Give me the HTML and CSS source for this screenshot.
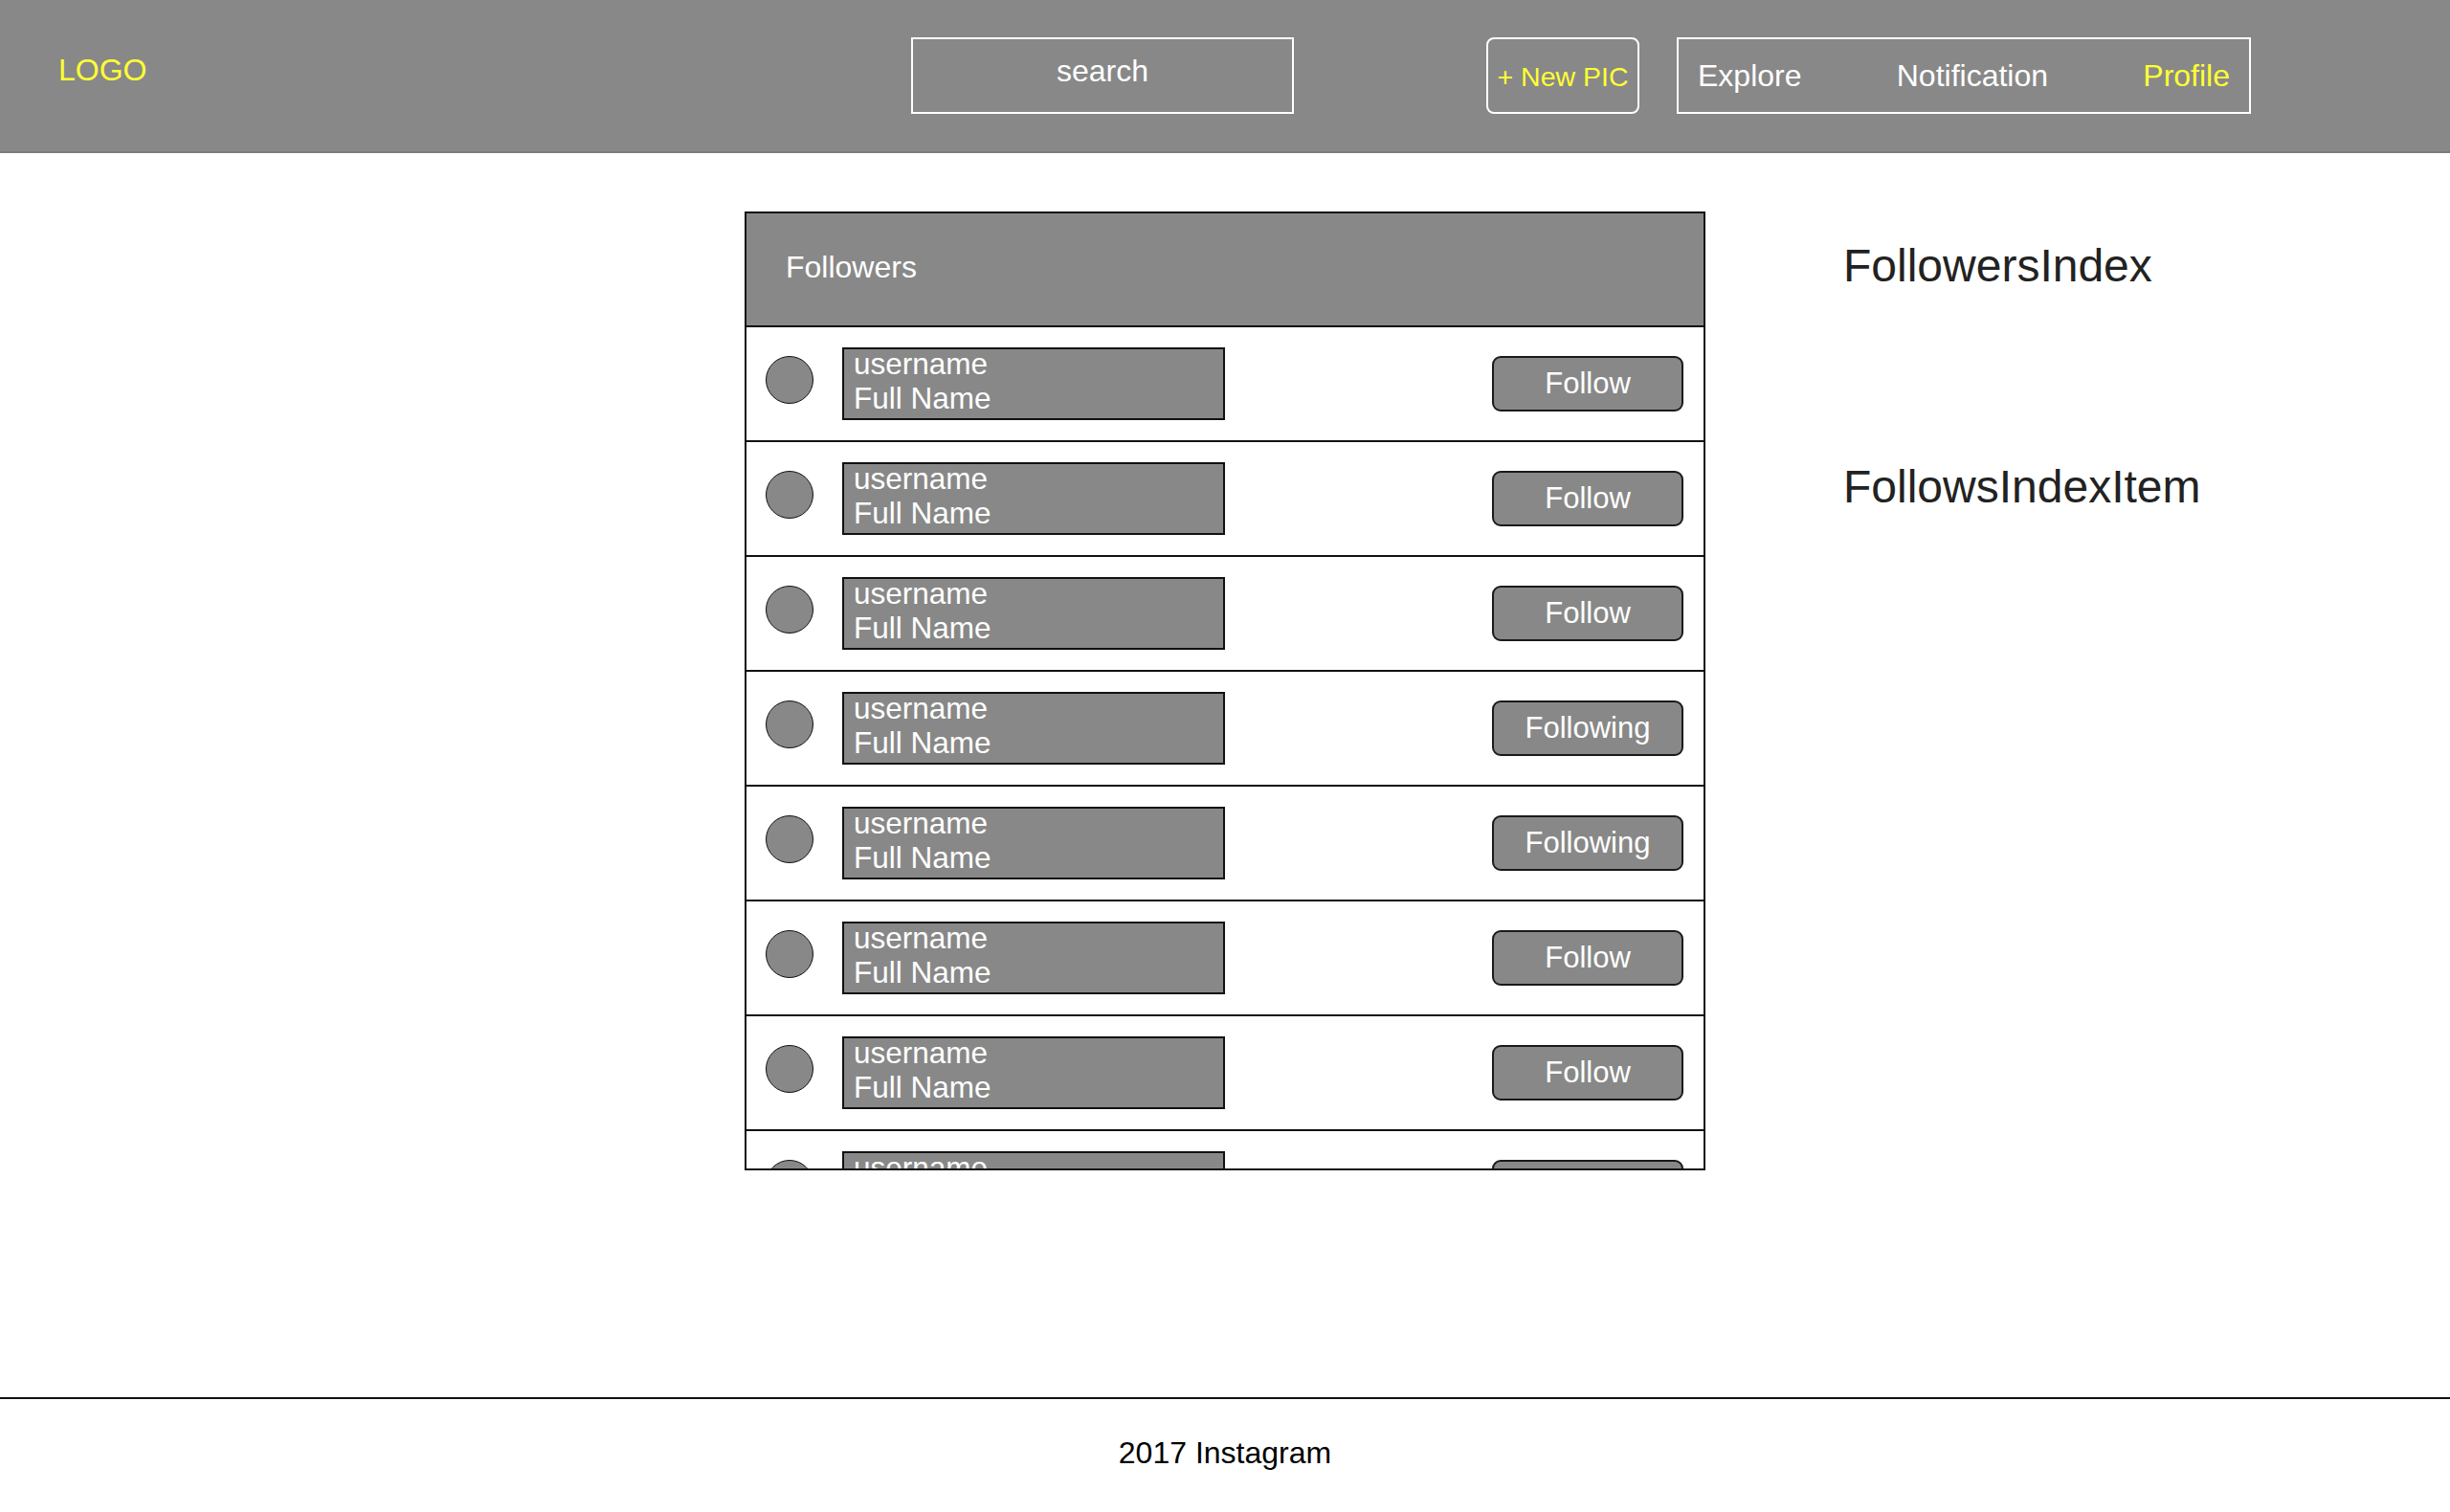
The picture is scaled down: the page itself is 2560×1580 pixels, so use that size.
FILE: index.html
```html
<!DOCTYPE html>
<html lang="en">
<head>
<meta charset="utf-8">
<title>FollowersIndex</title>
<link rel="stylesheet" href="styles.css">
</head>
<body>
<header class="topbar">
  <div class="logo">LOGO</div>
  <div class="search">search</div>
  <div class="new-pic">+ New PIC</div>
  <nav class="nav">
    <span class="nav-link">Explore</span>
    <span class="nav-link">Notification</span>
    <span class="nav-link nav-active">Profile</span>
  </nav>
</header>
<main class="main">
  <div class="spacer"></div>
  <section class="panel">
    <div class="panel-head">Followers</div>
    <div class="row"><div class="avatar"></div><div class="names"><div class="uname">username</div><div class="fname">Full Name</div></div><div class="btn">Follow</div></div>
    <div class="row"><div class="avatar"></div><div class="names"><div class="uname">username</div><div class="fname">Full Name</div></div><div class="btn">Follow</div></div>
    <div class="row"><div class="avatar"></div><div class="names"><div class="uname">username</div><div class="fname">Full Name</div></div><div class="btn">Follow</div></div>
    <div class="row"><div class="avatar"></div><div class="names"><div class="uname">username</div><div class="fname">Full Name</div></div><div class="btn">Following</div></div>
    <div class="row"><div class="avatar"></div><div class="names"><div class="uname">username</div><div class="fname">Full Name</div></div><div class="btn">Following</div></div>
    <div class="row"><div class="avatar"></div><div class="names"><div class="uname">username</div><div class="fname">Full Name</div></div><div class="btn">Follow</div></div>
    <div class="row"><div class="avatar"></div><div class="names"><div class="uname">username</div><div class="fname">Full Name</div></div><div class="btn">Follow</div></div>
    <div class="row"><div class="avatar"></div><div class="names"><div class="uname">username</div><div class="fname">Full Name</div></div><div class="btn">Follow</div></div>
  </section>
  <aside class="labels">
    <div class="label">FollowersIndex</div>
    <div class="label label-second">FollowsIndexItem</div>
  </aside>
</main>
<footer class="footer">2017 Instagram</footer>
</body>
</html>
```

FILE: styles.css
```css
* { box-sizing: border-box; }

html, body {
  margin: 0;
  padding: 0;
}

body {
  font-family: "Liberation Sans", Arial, Helvetica, sans-serif;
  background: #ffffff;
  color: #000;
  min-height: 100vh;
  display: flex;
  flex-direction: column;
}

/* ---------- top bar ---------- */
.topbar {
  height: 160px;
  background: #888888;
  border-bottom: 2px solid #7b7b7b;
  display: flex;
  align-items: center;
  padding-left: 61px;
}

.logo {
  flex: 0 0 891px;
  color: #ffff33;
  font-size: 32px;
  padding-bottom: 12px;
}

.search {
  flex: 0 0 400px;
  height: 80px;
  border: 2px solid #ffffff;
  color: #ffffff;
  font-size: 32px;
  display: flex;
  align-items: center;
  justify-content: center;
  padding-bottom: 9px;
}

.new-pic {
  flex: 0 0 160px;
  margin-left: 201px;
  height: 80px;
  border: 2px solid #ffffff;
  border-radius: 8px;
  color: #ffff33;
  font-size: 28.5px;
  display: flex;
  align-items: center;
  justify-content: center;
  padding-top: 2px;
}

.nav {
  flex: 0 0 600px;
  margin-left: 39px;
  height: 80px;
  border: 2px solid #ffffff;
  display: flex;
  align-items: center;
  justify-content: space-between;
  padding: 0 20px 0 20px;
}

.nav-link {
  color: #ffffff;
  font-size: 32px;
}

.nav-active { color: #ffff33; }

/* ---------- main ---------- */
.main {
  flex: 1;
  display: grid;
  grid-template-columns: 1fr 1004px 1fr;
  align-items: start;
  padding-top: 61px;
}

.panel {
  border: 2px solid #111111;
  height: 1002px;
  overflow: hidden;
}

.panel-head {
  height: 119px;
  background: #888888;
  border-bottom: 2px solid #111111;
  color: #ffffff;
  font-size: 32px;
  display: flex;
  align-items: center;
  padding: 0 0 5px 41px;
}

.row {
  height: 120px;
  border-bottom: 2px solid #111111;
  display: flex;
  align-items: center;
  padding: 0 21px 0 20px;
}

.avatar {
  flex: 0 0 50px;
  width: 50px;
  height: 50px;
  border-radius: 50%;
  background: #888888;
  border: 1.5px solid #111111;
  margin-bottom: 8px;
}

.names {
  flex: 0 0 400px;
  margin-left: 30px;
  height: 76px;
  background: #888888;
  border: 2px solid #111111;
  color: #ffffff;
  font-size: 31.5px;
  line-height: 31px;
  padding: 0 10px;
  overflow: hidden;
}

.uname { margin-top: 0; }
.fname { margin-top: 5px; }

.btn {
  margin-left: auto;
  flex: 0 0 200px;
  height: 58px;
  background: #888888;
  border: 2px solid #1a1a1a;
  border-radius: 9px;
  color: #ffffff;
  font-size: 31px;
  display: flex;
  align-items: center;
  justify-content: center;
}

.labels {
  padding: 29px 0 0 144px;
  color: #222222;
  font-size: 48px;
  white-space: nowrap;
}

.label-second { margin-top: 176px; }

/* ---------- footer ---------- */
.footer {
  border-top: 2px solid #111111;
  padding: 38px 0 43px;
  line-height: 37px;
  font-size: 32px;
  text-align: center;
  color: #000000;
}
```
